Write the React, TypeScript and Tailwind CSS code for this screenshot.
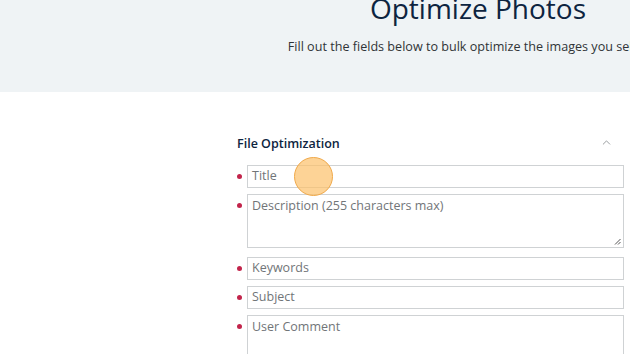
import { ChevronUp } from "lucide-react";

const fields = [
    { label: "Title", tall: false },
    { label: "Description (255 characters max)", tall: true },
    { label: "Keywords", tall: false },
    { label: "Subject", tall: false },
    { label: "User Comment", tall: true },
];

function Field({ label, tall }: { label: string; tall: boolean }) {
    return (
        <div className="flex items-start">
            <span className="w-[10px] pt-[9px] flex">
                <span className="w-[5px] h-[5px] rounded-full bg-[#c2244b]" />
            </span>
            {tall ? (
                <div className="flex-1 relative h-[54px] border border-[#cfd2d4] bg-white px-[4px] pt-[2px] text-[12.5px] text-[#717578]">
                    {label}
                    {/* resize grip */}
                    <svg className="absolute right-[2px] bottom-[2px]" width="7" height="7" viewBox="0 0 7 7">
                        <path d="M6.5 1 L1 6.5 M6.5 4 L4 6.5" stroke="#555" strokeWidth="1" />
                    </svg>
                </div>
            ) : (
                <div className="flex-1 h-[23px] border border-[#cfd2d4] bg-white px-[4px] flex items-center text-[12.5px] text-[#717578]">
                    {label}
                </div>
            )}
        </div>
    );
}

export default function App() {
    return (
        <div className="w-full h-[354px] overflow-hidden bg-white font-['Open_Sans',sans-serif] relative">
            <div className="w-[956px]">
                {/* Header */}
                <div className="h-[92px] bg-[#eff3f5] flex flex-col items-center">
                    <h1 className="text-[28px] leading-[29px] -mt-[6px] text-[#0d2440]">Optimize Photos</h1>
                    <p className="mt-[15px] text-[12.6px] text-[#2f3437]">
                        Fill out the fields below to bulk optimize the images you selected.
                    </p>
                </div>

                {/* Form */}
                <div className="ml-[237px] w-[387px] pt-[43px]">
                    <div className="flex items-center justify-between pr-[11px] h-[18px]">
                        <h2 className="text-[12.5px] font-semibold text-[#0d2440]">File Optimization</h2>
                        <ChevronUp className="w-[13px] h-[13px] text-[#8a8e91] -mt-[3px]" strokeWidth={1.6} />
                    </div>
                    <div className="mt-[12px] flex flex-col gap-[6px]">
                        {fields.map((f, i) => (
                            <div key={f.label} className={i === 2 ? "mt-[3px]" : ""}>
                                <Field label={f.label} tall={f.tall} />
                            </div>
                        ))}
                    </div>
                </div>
            </div>

            {/* click indicator */}
            <div className="absolute left-[294px] top-[157px] w-[39px] h-[39px] rounded-full bg-[#fcc06a]/70 border border-[#f0a94a]" />
        </div>
    );
}
